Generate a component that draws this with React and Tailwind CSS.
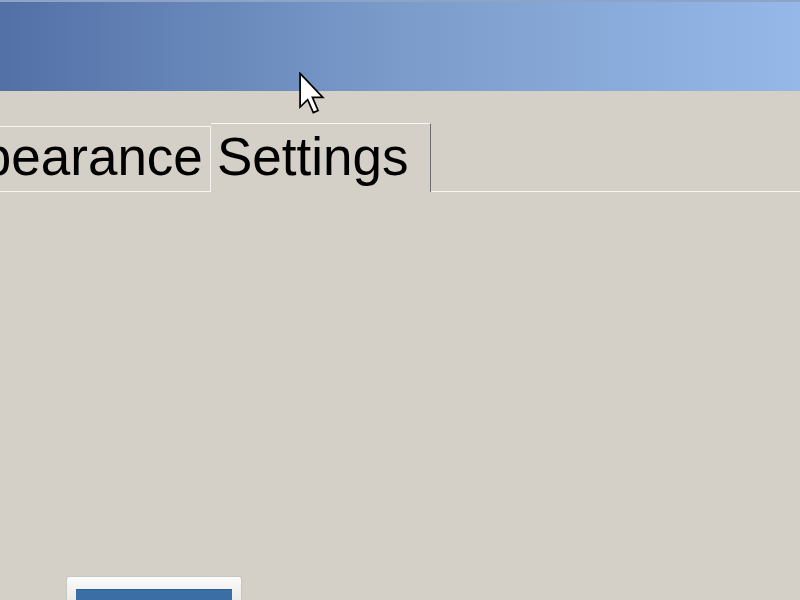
export default function App() {
  return (
    <div className="relative w-[800px] h-[600px] overflow-hidden bg-[#d4d0c8] font-['Liberation_Sans',Arial,sans-serif]">
      {/* title bar */}
      <div className="h-[91px] border-t-2 border-[#8ea3c8] bg-gradient-to-r from-[#5370a6] via-[#7b9ccb] to-[#96b8e8]" />

      {/* tabs */}
      <div className="mt-[32px] flex items-end h-[69px]">
        <div className="-ml-[90px] w-[301px] h-[66px] shrink-0 whitespace-nowrap border border-[#f6f5f1] pl-[6px] pt-[3px] text-[53px] leading-[53px] text-black">
          Appearance
        </div>
        <div className="w-[220px] h-[69px] shrink-0 whitespace-nowrap border-t border-r border-t-[#f6f5f1] border-r-[#6e6e6e] pl-[6px] pt-[6px] text-[53px] leading-[53px] text-black">
          Settings
        </div>
        <div className="flex-1 h-[69px] border-b border-[#f6f5f1]" />
      </div>

      {/* preview thumbnail */}
      <div className="ml-[66px] mt-[384px] w-[176px] h-[40px] rounded-t-[3px] border border-[#c8c6c0] bg-gradient-to-b from-[#fbfbfa] to-[#e2e1dc] px-[9px] pt-[12px]">
        <div className="h-full bg-[#3a6ea5] border-t border-[#2f5f95]" />
      </div>

      {/* mouse cursor */}
      <svg className="absolute left-[299px] top-[72px]" width="26" height="44" viewBox="0 0 12 20">
        <path
          d="M0.5 0.5 L0.5 16 L4 12.6 L6.6 18.6 L8.8 17.6 L6.2 11.6 L11 11.6 Z"
          fill="#fff"
          stroke="#000"
          strokeWidth="0.8"
          strokeLinejoin="miter"
        />
      </svg>
    </div>
  );
}
